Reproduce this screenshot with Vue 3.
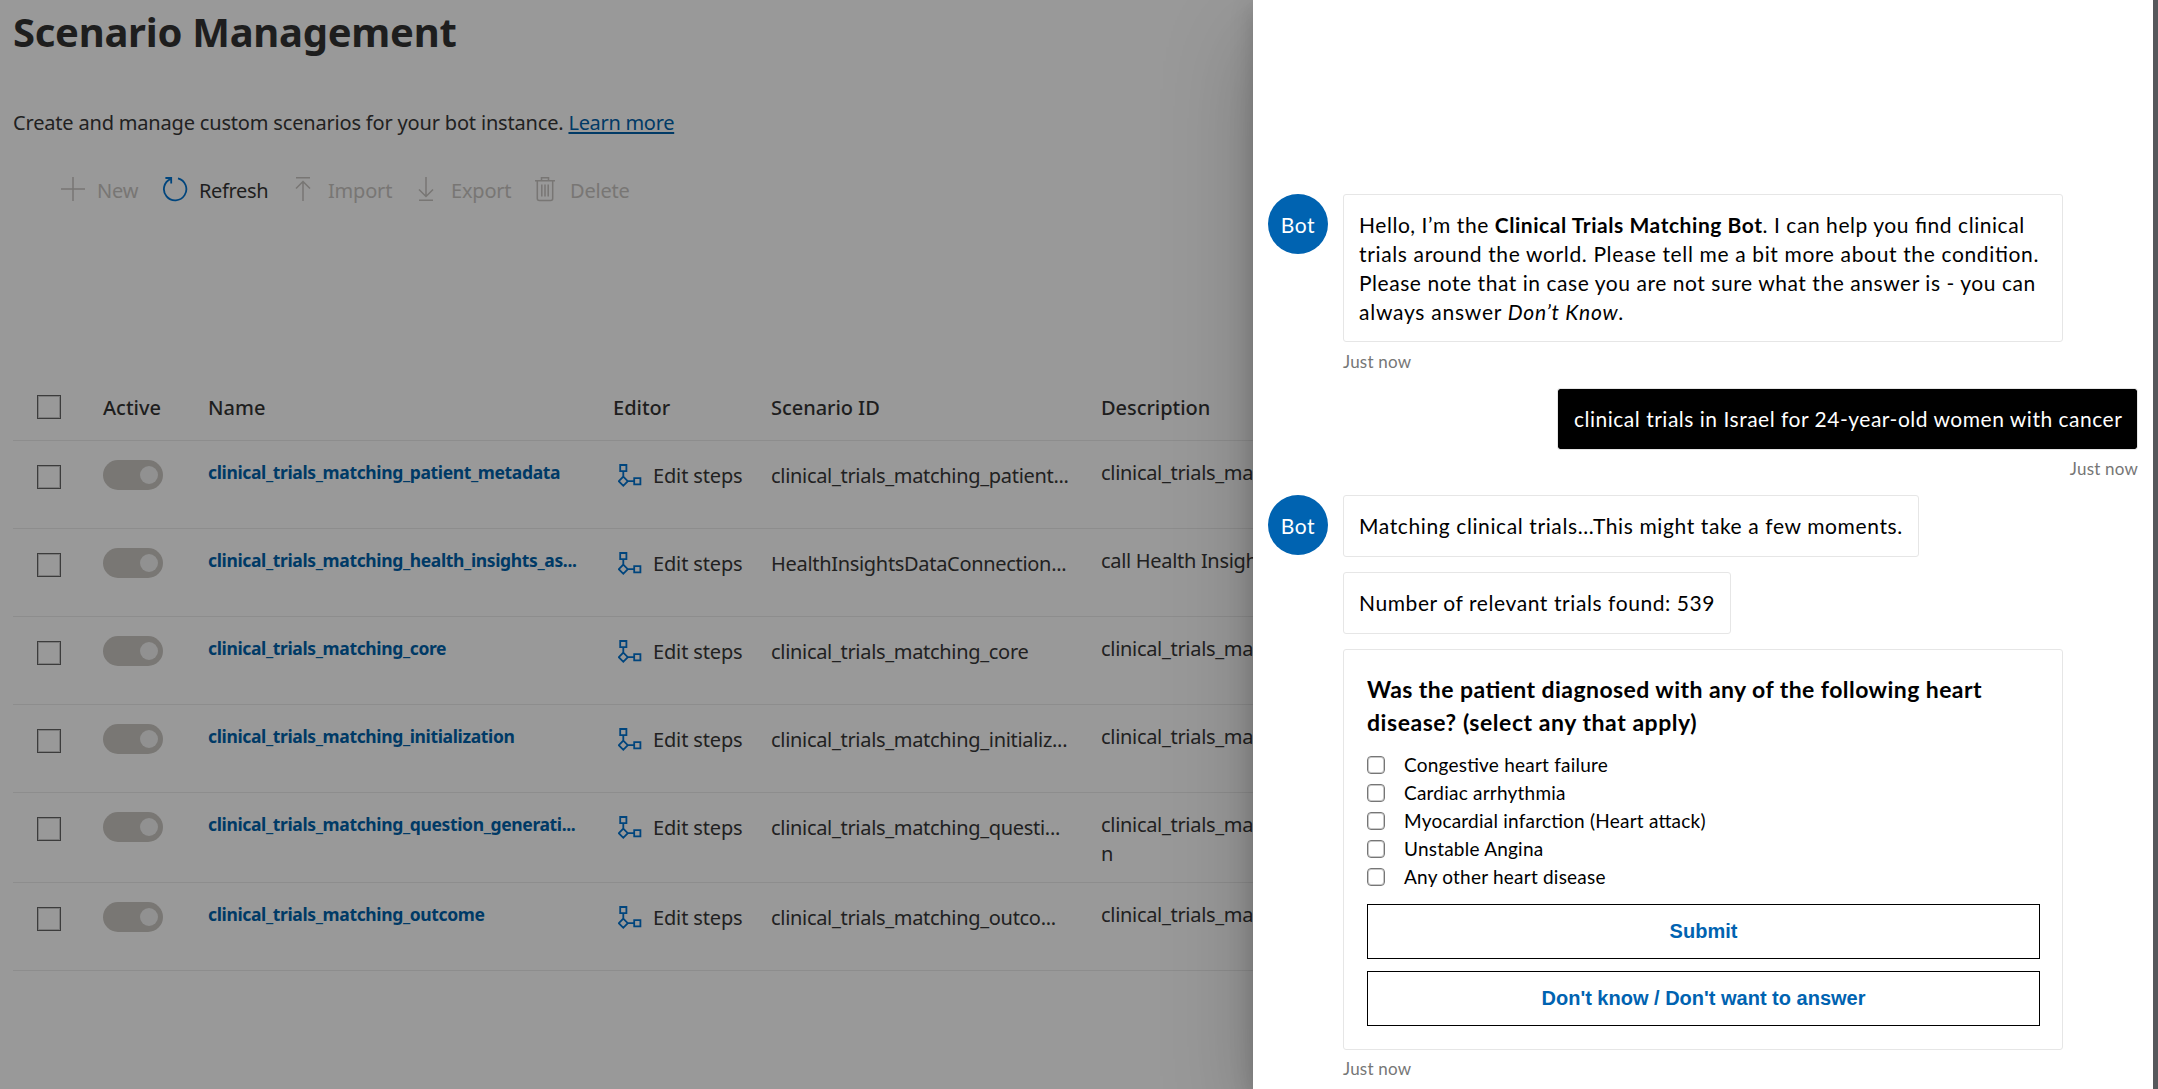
<script setup>
const rows = [
  { name: 'clinical_trials_matching_patient_metadata', id: 'clinical_trials_matching_patient...', desc: ['clinical_trials_ma'] },
  { name: 'clinical_trials_matching_health_insights_as...', id: 'HealthInsightsDataConnection...', desc: ['call Health Insigh'] },
  { name: 'clinical_trials_matching_core', id: 'clinical_trials_matching_core', desc: ['clinical_trials_ma'] },
  { name: 'clinical_trials_matching_initialization', id: 'clinical_trials_matching_initializ...', desc: ['clinical_trials_ma'] },
  { name: 'clinical_trials_matching_question_generati...', id: 'clinical_trials_matching_questi...', desc: ['clinical_trials_ma', 'n'] },
  { name: 'clinical_trials_matching_outcome', id: 'clinical_trials_matching_outco...', desc: ['clinical_trials_ma'] },
]
const options = [
  'Congestive heart failure',
  'Cardiac arrhythmia',
  'Myocardial infarction (Heart attack)',
  'Unstable Angina',
  'Any other heart disease',
]
</script>

<template>
  <div class="screen">
    <main class="page">
      <h1>Scenario Management</h1>
      <p class="intro">Create and manage custom scenarios for your bot instance. <a>Learn more</a></p>

      <div class="toolbar">
        <button class="tool new">
          <svg width="24" height="26" viewBox="0 0 24 26"><path d="M12 1v24M0 13h24" /></svg>
          <span>New</span>
        </button>
        <button class="tool refresh">
          <svg width="26" height="26" viewBox="0 0 26 26"><path d="M8.8 2.8A11.2 11.2 0 1 0 16 2.3M3.4 2h5.8v5.6" /></svg>
          <span>Refresh</span>
        </button>
        <button class="tool import">
          <svg width="16" height="26" viewBox="0 0 16 26"><path d="M1 1.8h14M8 25V5.5M1 12.500l7-7 7 7" /></svg>
          <span>Import</span>
        </button>
        <button class="tool export">
          <svg width="16" height="26" viewBox="0 0 16 26"><path d="M1 24.2h14M8 1v19.5M1 13.5l7 7 7-7" /></svg>
          <span>Export</span>
        </button>
        <button class="tool delete">
          <svg width="20" height="26" viewBox="0 0 20 26"><path d="M0 4.8h20M6.5 4.8v-3h7v3M2.3 4.8V22.5q0 2 2 2h11.4q2 0 2-2V4.8M6.8 8.5v12M10 8.5v12M13.2 8.5v12" /></svg>
          <span>Delete</span>
        </button>
      </div>

      <div class="table">
        <div class="row head">
          <i class="box"></i>
          <span class="c-active">Active</span>
          <span class="c-name">Name</span>
          <span class="c-editor">Editor</span>
          <span class="c-id">Scenario ID</span>
          <span class="c-desc">Description</span>
        </div>
        <div v-for="r in rows" :key="r.name" class="row" :class="{ tall: r.desc.length > 1 }">
          <i class="box"></i>
          <span class="c-active"><i class="toggle"><i class="knob"></i></i></span>
          <b class="c-name">{{ r.name }}</b>
          <span class="c-editor">
            <svg width="24" height="24" viewBox="0 0 24 24"><path d="M2.2 1h6.2v6.2H2.2zM16.2 14.1h6.2v6.2h-6.2zM5.3 7.2v5.5M9.8 17.2h6.4M5.3 12.6l4.5 4.6-4.5 4.6-4.5-4.6z" /></svg>
            <span>Edit steps</span>
          </span>
          <span class="c-id">{{ r.id }}</span>
          <span class="c-desc"><span v-for="d in r.desc" :key="d">{{ d }}</span></span>
        </div>
      </div>
    </main>

    <aside class="chat">
      <section class="turn">
        <div class="avatar">Bot</div>
        <div class="stack">
          <div class="bubble long">
            <p class="l1">Hello, I’m the <b>Clinical Trials Matching Bot</b>. I can help you find clinical</p>
            <p class="l2">trials around the world. Please tell me a bit more about the condition.</p>
            <p class="l3">Please note that in case you are not sure what the answer is - you can</p>
            <p class="l4">always answer <em>Don’t Know</em>.</p>
          </div>
          <time>Just now</time>
        </div>
      </section>

      <section class="turn mine">
        <div class="bubble user"><p>clinical trials in Israel for 24-year-old women with cancer</p></div>
        <time>Just now</time>
      </section>

      <section class="turn second">
        <div class="avatar">Bot</div>
        <div class="stack">
          <div class="bubble matching"><p>Matching clinical trials...This might take a few moments.</p></div>
          <div class="bubble count"><p>Number of relevant trials found: 539</p></div>
          <div class="card">
            <h2><span class="q1">Was the patient diagnosed with any of the following heart</span><span class="q2">disease? (select any that apply)</span></h2>
            <label v-for="o in options" :key="o"><i class="check"></i><span>{{ o }}</span></label>
            <button class="action">Submit</button>
            <button class="action">Don't know / Don't want to answer</button>
          </div>
          <time>Just now</time>
        </div>
      </section>
    </aside>
    <div class="edge"></div>
  </div>
</template>

<style>
html, body { margin: 0; overflow: hidden; }
</style>

<style scoped>
* { box-sizing: border-box; }
i { font-style: normal; display: block; }
p, h1, h2 { margin: 0; white-space: nowrap; }
button { border: 0; background: none; padding: 0; margin: 0; }
svg { display: block; flex: none; fill: none; stroke: currentColor; stroke-width: 1.5; }

.screen { display: flex; width: 2158px; height: 1089px; overflow: hidden; background: #999; }
.page {
  width: 1253px; height: 1089px; flex: none; overflow: hidden; padding-left: 13px;
  font-family: "Noto Sans", "Open Sans", sans-serif; font-size: 20px; color: #212121;
}
h1 { font-size: 40px; line-height: 60px; height: 60px; margin-top: 2px; letter-spacing: -0.28px; font-weight: 700; color: #1e1e1e; }
.intro { margin-top: 46px; height: 30px; line-height: 30px; letter-spacing: -0.18px; }
.intro a { color: #003a66; letter-spacing: -0.3px; text-decoration: underline; text-decoration-thickness: 2px; text-underline-offset: 2px; text-decoration-skip-ink: none; }

.toolbar { display: flex; margin-top: 36px; height: 30px; padding-left: 48px; }
.tool { display: flex; align-items: center; height: 30px; flex: none; color: #787674; font: 20px/30px "Noto Sans", sans-serif; letter-spacing: -0.2px; white-space: nowrap; }
.tool span { position: relative; top: 2px; }
.tool svg { margin-right: 12px; }
.tool.new { width: 101px; }
.tool.refresh { width: 133px; color: #1e1e1e; letter-spacing: -0.35px; }
.tool.refresh svg { color: #00457d; stroke-width: 1.8; margin-right: 11px; }
.tool.import { width: 123px; }
.tool.import svg, .tool.export svg { margin-right: 17px; }
.tool.export { width: 117px; }
.tool.delete svg { margin-right: 15px; }

.table { margin-top: 170px; }
.row { display: flex; align-items: flex-start; height: 88px; border-bottom: 1px solid #8d8d8d; white-space: nowrap; }
.row.tall { height: 90px; }
.row.head { height: 67px; margin-top: 0; font-weight: 500; color: #1e1e1e; line-height: 30px; padding-top: 19px; }
.box { width: 24px; height: 24px; border: 1px solid #3c3c3c; box-shadow: inset 0 0 0 1px #7c7c7c; margin: 24px 0 0 24px; flex: none; }
.head .box { margin-top: 2px; }
.c-active { width: 105px; margin-left: 42px; flex: none; }
.c-name { width: 405px; flex: none; }
.c-editor { width: 158px; flex: none; display: flex; }
.c-id { width: 330px; flex: none; }
.c-desc { display: flex; flex-direction: column; flex: none; }
.head .c-id, .head .c-desc { letter-spacing: -0.05px; }
.toggle { width: 60px; height: 30px; border-radius: 15px; background: #797774; margin-top: 19px; padding: 6px 0 0 37px; }
.knob { width: 18px; height: 18px; border-radius: 50%; background: #919191; }
.row:not(.head) .c-name { font-size: 17.5px; font-weight: 700; letter-spacing: -0.36px; color: #003a66; line-height: 28px; padding-top: 17px; }
.row:not(.head) .c-editor { padding: 20px 0 0 5px; line-height: 30px; letter-spacing: -0.15px; }
.c-editor svg { color: #00457d; stroke-width: 1.8; margin: 3px 11px 0 0; }
.row:not(.head) .c-id { padding-top: 20px; line-height: 30px; letter-spacing: -0.31px; }
.row:not(.head) .c-desc { padding-top: 17px; line-height: 29px; letter-spacing: -0.31px; }

.chat {
  position: relative; z-index: 1; width: 900px; height: 1089px; flex: none; background: #fff; color: #000;
  padding: 194px 15px 0 15px; font-family: Lato, "Open Sans", sans-serif; font-size: 21px; letter-spacing: 0.55px;
  font-feature-settings: "liga" 1;
  box-shadow: 0 38px 86px rgba(0, 0, 0, .22), 0 7px 22px rgba(0, 0, 0, .18);
}
.edge { width: 5px; background: #56585c; position: relative; z-index: 2; }
.turn { display: flex; align-items: flex-start; }
.avatar { width: 60px; height: 60px; border-radius: 50%; background: #0063b1; color: #fff; line-height: 62px; text-align: center; flex: none; margin-right: 15px; }
.stack { display: flex; flex-direction: column; align-items: flex-start; }
.bubble { border: 1px solid #e6e6e6; border-radius: 3px; padding: 15px 15px 0; line-height: 29px; height: 62px; }
.bubble.long { width: 720px; height: 148px; }
.l2 { letter-spacing: 0.64px; }
.l3 { letter-spacing: 0.55px; }
.l4 { letter-spacing: 0.75px; }
time { display: block; font-size: 17px; line-height: 24px; letter-spacing: 0.2px; color: #767676; margin-top: 8px; }
.mine { flex-direction: column; align-items: flex-end; margin-top: 14px; }
.user { width: 581px; height: 62px; background: #000; background-clip: padding-box; color: #fff; padding-left: 16px; letter-spacing: 0.51px; }
.mine time { margin-top: 7px; }
.second { margin-top: 14px; }
.second time { margin-top: 7px; }
.matching { width: 576px; letter-spacing: 0.61px; }
.count { width: 388px; margin-top: 15px; letter-spacing: 0.58px; }
.card { width: 720px; height: 401px; margin-top: 15px; border: 1px solid #e6e6e6; border-radius: 3px; padding: 23px 22px 0 23px; }
h2 { font-size: 23px; line-height: 33px; letter-spacing: 0.43px; font-weight: 700; margin-bottom: 12px; }
h2 span { display: block; width: max-content; }
.q2 { letter-spacing: 0.55px; }
label { display: flex; align-items: center; height: 28px; font-size: 19px; letter-spacing: 0.22px; line-height: 28px; white-space: nowrap; }
.check { width: 18px; height: 18px; border: 1px solid #767676; box-shadow: inset 0 0 0 1px #c8c8c8; border-radius: 4px; margin-right: 19px; flex: none; }
.action { display: block; width: 673px; height: 55px; margin-top: 12px; border: 1px solid #000; color: #0063b1; font: bold 20px/53px "Liberation Sans", Arial, sans-serif; letter-spacing: 0; text-align: center; }
label + .action { margin-top: 13px; }
</style>
